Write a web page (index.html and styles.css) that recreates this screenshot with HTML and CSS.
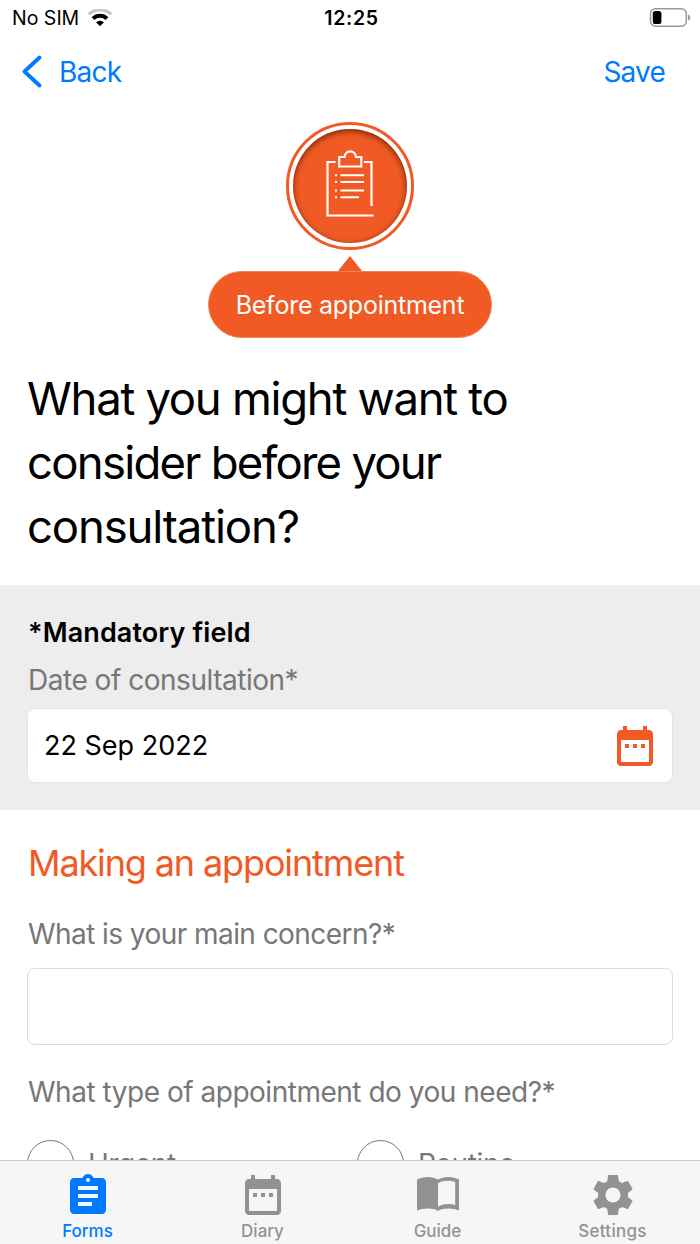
FILE: index.html
```html
<!DOCTYPE html>
<html lang="en">
  <head>
    <meta charset="UTF-8" />
    <meta name="viewport" content="width=device-width, initial-scale=1.0" />
    <title>Before appointment</title>
    <link rel="stylesheet" href="styles.css">
  </head>
  <body>
    <div class="status-bar">
      <div class="carrier">
        <span>No SIM</span>
        <svg width="26" height="19" viewBox="0 0 26 19">
          <path d="M0.7 4.2a17.4 17.4 0 0 1 24.6 0L23 6.6a14.2 14.2 0 0 0-20 0z" fill="#c8c8c8" />
          <path d="M4.6 8.3a12 12 0 0 1 16.8 0L18.6 11.1a8 8 0 0 0-11.2 0z" />
          <path d="M9 13.2a5.9 5.9 0 0 1 8 0L13 17.200z" />
        </svg>
      </div>
      <span class="time">12:25</span>
      <svg class="battery" width="42" height="20" viewBox="0 0 42 20">
        <rect x="1.5" y="0.8" width="35.8" height="17.4" rx="5" fill="none" stroke="#999" stroke-width="1.5" />
        <rect x="3.8" y="3" width="8.6" height="13" rx="2.6" />
        <path d="M39 6.4c3 1 3 5.2 0 6.2z" fill="#999" />
      </svg>
    </div>

    <nav class="nav">
      <a class="nav-back">
        <svg width="22" height="34" viewBox="0 0 22 34">
          <path d="M19.500 2.500L4.500 16.500L19.500 30.500" fill="none" stroke="#007aff" stroke-width="3.800" stroke-linecap="round" stroke-linejoin="round" />
        </svg>
        <span>Back</span>
      </a>
      <a class="nav-save">Save</a>
    </nav>

    <main>
      <div class="stage">
        <div class="stage-ring">
          <div class="stage-circle">
            <svg width="50" height="72" viewBox="0 0 50 72" fill="none" stroke="#fff" stroke-width="2.200">
              <path d="M10.500 12H2.500V65.500H48.500" />
              <path d="M39 12H46.500V56" />
              <path d="M14.200 7H19.500C20 -0.500 30.500 -0.500 31 7H36.300V16.500H14.200z" />
              <path d="M15.500 25.300H39M15.500 32H39M15.500 40.500H39M15.500 47.300H34" stroke-width="1.900" />
              <path d="M10 25.300H12M10 32H12M10 40.500H12M10 47.300H12" stroke-width="1.900" />
            </svg>
          </div>
        </div>
        <div class="stage-arrow"></div>
        <div class="stage-label"><span>Before appointment</span></div>
      </div>

      <h1>
        <span class="line-1">What you might want to</span>
        <span class="line-2">consider before your</span>
        <span class="line-3">consultation?</span>
      </h1>

      <section class="date-section">
        <p class="mandatory">*Mandatory field</p>
        <p class="label date-label">Date of consultation*</p>
        <div class="date-input">
          <span>22 Sep 2022</span>
          <svg width="48" height="48" viewBox="0 0 24 24" fill="#f15a24">
            <path d="M9 11H7v2h2v-2zm4 0h-2v2h2v-2zm4 0h-2v2h2v-2zm2-7h-1V2h-2v2H8V2H6v2H5c-1.110 0-2 .9-2 2v14c0 1.100.89 2 2 2h14c1.100 0 2-.9 2-2V6c0-1.100-.9-2-2-2zm0 16H5V9h14v11z" />
          </svg>
        </div>
      </section>

      <section class="questions">
        <h2>Making an appointment</h2>
        <p class="label concern-label">What is your main concern?*</p>
        <div class="text-input"></div>
        <p class="label type-label">What type of appointment do you need?*</p>
        <div class="options">
          <div class="option"><i class="radio"></i><span>Urgent</span></div>
          <div class="option"><i class="radio"></i><span>Routine</span></div>
        </div>
      </section>
    </main>

    <footer class="tabs">
      <a class="tab active">
        <svg width="48" height="50" viewBox="0 -1 24 25">
          <path d="M19 3h-4.180C14.400 1.840 13.300 1 12 1c-1.300 0-2.400.84-2.820 2H5c-1.100 0-2 .9-2 2v14c0 1.100.9 2 2 2h14c1.100 0 2-.9 2-2V5c0-1.100-.9-2-2-2zm-7 0c.55 0 1 .45 1 1s-.45 1-1 1-1-.45-1-1 .45-1 1-1zm2 14H7v-2h7v2zm3-4H7v-2h10v2zm0-4H7V7h10v2z" />
        </svg>
        <span>Forms</span>
      </a>
      <a class="tab">
        <svg width="48" height="50" viewBox="0 -0.500 24 25">
          <path d="M9 11H7v2h2v-2zm4 0h-2v2h2v-2zm4 0h-2v2h2v-2zm2-7h-1V2h-2v2H8V2H6v2H5c-1.110 0-2 .9-2 2v14c0 1.100.89 2 2 2h14c1.100 0 2-.9 2-2V6c0-1.100-.9-2-2-2zm0 16H5V9h14v11z" />
        </svg>
        <span>Diary</span>
      </a>
      <a class="tab">
        <svg width="48" height="50" viewBox="0 -2 48 50">
          <path fill-rule="evenodd" d="M3 7.500C9 4 18.500 4 24 7.500C29.500 4 39 4 45 7.500V38.500C39 36 29.500 35.500 24 39C18.500 35.500 9 36 3 38.500zM24 11.200V34.600C29 31.800 36 31.500 41.200 33V10C36 8.200 29 8.300 24 11.200z" />
        </svg>
        <span>Guide</span>
      </a>
      <a class="tab">
        <svg width="50" height="50" viewBox="0 0 24 24">
          <path d="M19.140 12.940c.04-.3.06-.61.06-.94 0-.32-.02-.64-.07-.94l2.030-1.580c.18-.14.23-.41.12-.61l-1.920-3.320c-.12-.22-.37-.29-.59-.22l-2.390.96c-.5-.38-1.030-.7-1.620-.94l-.36-2.540c-.04-.24-.24-.41-.48-.41h-3.840c-.24 0-.43.17-.47.41l-.36 2.540c-.59.24-1.130.57-1.620.94l-2.390-.96c-.22-.08-.47 0-.59.22L2.740 8.870c-.12.21-.08.47.12.61l2.030 1.580c-.05.3-.09.63-.09.94s.02.64.07.94l-2.030 1.580c-.18.14-.23.41-.12.61l1.920 3.320c.12.22.37.29.59.22l2.390-.96c.5.38 1.030.7 1.620.94l.36 2.540c.05.24.24.41.48.41h3.840c.24 0 .44-.17.47-.41l.36-2.540c.59-.24 1.130-.56 1.620-.94l2.390.96c.22.08.47 0 .59-.22l1.920-3.320c.12-.22.07-.47-.12-.61l-2.010-1.580zM12 15.600c-1.980 0-3.600-1.620-3.600-3.600s1.620-3.600 3.600-3.600 3.600 1.620 3.600 3.600-1.620 3.600-3.600 3.600z" />
        </svg>
        <span class="settings-label">Settings</span>
      </a>
    </footer>
  </body>
</html>
```

FILE: styles.css
```css
* {
  box-sizing: border-box;
}
body {
  margin: 0;
  height: 1244px;
  display: flex;
  flex-direction: column;
  overflow: hidden;
  background: #fff;
  color: #000;
  font-family: Inter, "Liberation Sans", sans-serif;
}
h1,
h2,
p {
  margin: 0;
  font-weight: 400;
}
svg {
  display: block;
  flex-shrink: 0;
}
span {
  white-space: nowrap;
}
.status-bar {
  height: 36px;
  padding: 0 9px 0 12px;
  display: grid;
  grid-template-columns: 1fr auto 1fr;
  align-items: center;
  font-size: 19.5px;
}
.carrier {
  display: flex;
  align-items: center;
  gap: 8px;
}
.time {
  font-weight: 600;
  letter-spacing: 0.7px;
}
.battery {
  justify-self: end;
}
.nav {
  height: 70px;
  padding: 1px 35px 0 20px;
  display: flex;
  justify-content: space-between;
  align-items: center;
  color: #007aff;
  font-size: 28px;
  letter-spacing: -0.8px;
}
.nav-back {
  display: flex;
  align-items: center;
  gap: 17px;
}
main {
  flex: 1;
  min-height: 0;
  overflow: hidden;
}
.stage {
  padding-top: 16px;
  display: flex;
  flex-direction: column;
  align-items: center;
}
.stage-ring {
  width: 128px;
  height: 128px;
  padding: 4px;
  border: 3px solid #f15a24;
  border-radius: 50%;
}
.stage-circle {
  height: 100%;
  display: flex;
  justify-content: center;
  align-items: center;
  border-radius: 50%;
  background: #f15a24;
  box-shadow: inset 0 2px 6px rgba(70, 20, 0, 0.75);
}
.stage-arrow {
  margin-top: 6px;
  border: 12px solid transparent;
  border-top: 0;
  border-bottom: 15px solid #f15a24;
}
.stage-label {
  width: 284px;
  height: 67px;
  border: 1px solid #f4814f;
  border-radius: 34px;
  background: #f15a24;
  color: #fff;
  font-size: 25px;
  line-height: 67px;
  letter-spacing: -0.25px;
  text-align: center;
}
h1 {
  padding: 29px 27px 0;
  height: 247px;
  font-size: 45.5px;
  line-height: 64px;
}
h1 span {
  display: block;
}
.line-1 {
  letter-spacing: -1.3px;
}
.line-2 {
  letter-spacing: -1.75px;
}
.line-3 {
  letter-spacing: -1.15px;
}
.date-section {
  height: 225px;
  padding: 31px 27px 0;
  background: #ededed;
}
.mandatory {
  padding-left: 1px;
  font-size: 27px;
  font-weight: 600;
  line-height: 34px;
  letter-spacing: 0.1px;
}
.label {
  padding-left: 1px;
  color: #777;
  font-size: 28px;
  line-height: 36px;
  letter-spacing: -0.48px;
}
.date-label {
  margin-top: 12px;
}
.date-input {
  margin-top: 10px;
  height: 75px;
  padding: 0 13px 0 16px;
  display: flex;
  justify-content: space-between;
  align-items: center;
  border: 1px solid #e4e4e4;
  border-radius: 8px;
  background: #fff;
  font-size: 27px;
}
.questions {
  padding: 29px 27px 0;
}
h2 {
  padding-left: 1px;
  color: #f15a24;
  font-size: 36px;
  line-height: 48px;
  letter-spacing: -1.13px;
}
.concern-label {
  margin-top: 29px;
  letter-spacing: -0.56px;
}
.text-input {
  margin-top: 16px;
  height: 77px;
  border: 1px solid #dcdcdc;
  border-radius: 8px;
}
.type-label {
  margin-top: 29px;
}
.options {
  margin-top: 30px;
  display: grid;
  grid-template-columns: 330px 1fr;
}
.option {
  display: flex;
  align-items: center;
  gap: 14px;
  color: #777;
  font-size: 28px;
  letter-spacing: -0.4px;
}
.radio {
  width: 47px;
  height: 47px;
  border: 1.5px solid #777;
  border-radius: 50%;
}
.tabs {
  height: 84px;
  display: grid;
  grid-template-columns: repeat(4, 1fr);
  border-top: 1px solid #c8c8c8;
  background: #f6f6f6;
}
.tab {
  padding-top: 9px;
  display: flex;
  flex-direction: column;
  align-items: center;
  gap: 1px;
  color: #929292;
  fill: currentColor;
  font-size: 17px;
  font-weight: 500;
}
.tab.active {
  color: #007aff;
}
.settings-label {
  letter-spacing: 0.3px;
}
```
